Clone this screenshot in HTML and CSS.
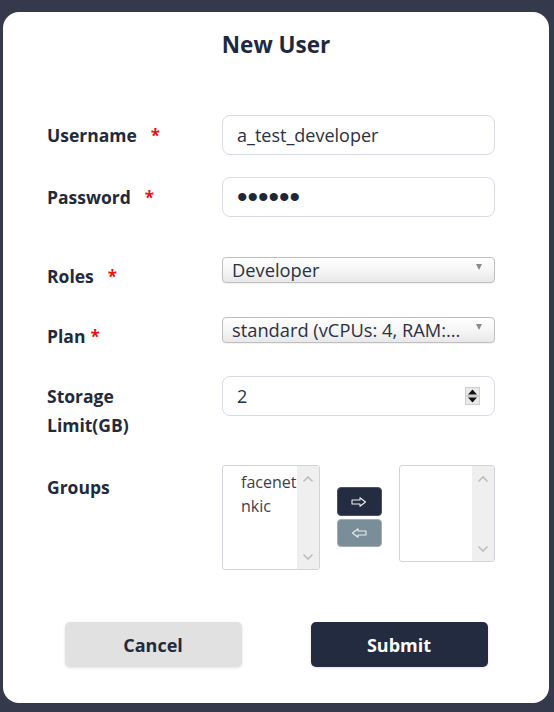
FILE: index.html
```
<!DOCTYPE html>
<html lang="en">
<head>
<meta charset="utf-8">
<title>New User</title>
<link rel="stylesheet" href="styles.css">
</head>
<body>
<div class="modal">
  <h1 class="title">New User</h1>
  <form class="form">
    <div class="row row-user">
      <label class="label">Username<span class="req">*</span></label>
      <input class="input" type="text" value="a_test_developer">
    </div>
    <div class="row row-pass">
      <label class="label">Password<span class="req">*</span></label>
      <input class="input input-pass" type="password" value="secret">
    </div>
    <div class="row row-roles">
      <label class="label label-sel">Roles<span class="req">*</span></label>
      <div class="select"><span class="select-text">Developer</span><span class="caret"></span></div>
    </div>
    <div class="row row-plan">
      <label class="label label-sel">Plan<span class="req req-near">*</span></label>
      <div class="select"><span class="select-text">standard (vCPUs: 4, RAM:...</span><span class="caret"></span></div>
    </div>
    <div class="row row-storage">
      <label class="label">Storage<br>Limit(GB)</label>
      <div class="input number">
        <span class="number-val">2</span>
        <svg class="spin" width="15" height="18" viewBox="0 0 15 18">
          <rect x="0.5" y="0.5" width="14" height="17" fill="#e9e9e9" stroke="#d0d0d0"/>
          <line x1="1" y1="9" x2="14" y2="9" stroke="#b5b5b5"/>
          <path d="M3 7.5 L7.5 2.5 L12 7.5 Z" fill="#111"/>
          <path d="M3 10.5 L7.5 15.5 L12 10.5 Z" fill="#111"/>
        </svg>
      </div>
    </div>
    <div class="row row-groups">
      <label class="label label-groups">Groups</label>
      <div class="transfer">
        <div class="listbox listbox-left">
          <div class="options">
            <div class="opt">facenet</div>
            <div class="opt">nkic</div>
          </div>
          <div class="sbar">
            <svg width="12" height="8" viewBox="0 0 12 8"><path d="M1.5 6.5 L6 2 L10.5 6.5" fill="none" stroke="#bdbdbd" stroke-width="1.6"/></svg>
            <svg width="12" height="8" viewBox="0 0 12 8"><path d="M1.5 1.5 L6 6 L10.5 1.5" fill="none" stroke="#bdbdbd" stroke-width="1.6"/></svg>
          </div>
        </div>
        <div class="movers">
          <button type="button" class="mover mover-add">
            <svg width="16" height="10" viewBox="0 0 16 10"><path d="M1 3 H9 V0.8 L14.5 5 L9 9.2 V7 H1 Z" fill="none" stroke="#f0f0f0" stroke-width="1.1" stroke-linejoin="round"/></svg>
          </button>
          <button type="button" class="mover mover-remove">
            <svg width="16" height="10" viewBox="0 0 16 10"><path d="M15 3 H7 V0.8 L1.5 5 L7 9.2 V7 H15 Z" fill="none" stroke="#e8eef0" stroke-width="1.1" stroke-linejoin="round"/></svg>
          </button>
        </div>
        <div class="listbox listbox-right">
          <div class="options"></div>
          <div class="sbar">
            <svg width="12" height="8" viewBox="0 0 12 8"><path d="M1.5 6.5 L6 2 L10.5 6.5" fill="none" stroke="#bdbdbd" stroke-width="1.6"/></svg>
            <svg width="12" height="8" viewBox="0 0 12 8"><path d="M1.5 1.5 L6 6 L10.5 1.5" fill="none" stroke="#bdbdbd" stroke-width="1.6"/></svg>
          </div>
        </div>
      </div>
    </div>
    <div class="actions">
      <button type="button" class="btn btn-cancel">Cancel</button>
      <button type="button" class="btn btn-submit">Submit</button>
    </div>
  </form>
</div>
</body>
</html>
```
FILE: styles.css
```
* { box-sizing: border-box; }
html, body { height: 100%; }
body {
  margin: 0;
  background: #343a4b;
  font-family: "Open Sans", "Liberation Sans", sans-serif;
  color: #222a3b;
  padding: 12px 5px 9px 3px;
}
.modal {
  background: #fff;
  border-radius: 16px;
  height: 691px;
  padding: 19px 54px 0 44px;
}
.title {
  margin: 0;
  font-size: 22.5px;
  line-height: 28px;
  font-weight: 700;
  text-align: center;
  color: #1e293d;
  padding-left: 10px;
}
.form {
  margin-top: 56px;
  display: flex;
  flex-direction: column;
}
.row {
  display: grid;
  grid-template-columns: 175px 273px;
  align-items: start;
}
.row-pass { margin-top: 22px; }
.row-roles { margin-top: 40px; }
.row-plan { margin-top: 26px; }
.row-storage { margin-top: 25px; }
.row-groups { margin-top: 25px; }
.label {
  font-size: 17.5px;
  font-weight: 700;
  line-height: 29px;
  margin-top: 6px;
  color: #222a3b;
}
.label-sel { margin-top: 5px; }
.label-groups { margin-top: 8px; }
.req {
  color: #ee1111;
  margin-left: 14px;
  font-size: 17px;
}
.req-near { margin-left: 5px; }
.input {
  height: 40px;
  border: 1px solid #d8dbe3;
  border-radius: 8px;
  padding: 0 14px;
  font-family: inherit;
  font-size: 18px;
  color: #2a3142;
  background: #fff;
  outline: none;
  width: 100%;
}
.input-pass {
  font-family: "Liberation Sans", sans-serif;
  font-size: 30px;
  letter-spacing: 0;
  color: #1f2637;
}
.select {
  height: 26px;
  border: 1px solid #bfbfbf;
  border-radius: 4px;
  background: linear-gradient(#ffffff 0%, #f6f6f6 50%, #e8e8e8 100%);
  display: flex;
  align-items: center;
  padding: 0 12px 0 9px;
  gap: 10px;
  box-shadow: 0 1px 1px rgba(0,0,0,0.06);
}
.select-text {
  flex: 1;
  min-width: 0;
  white-space: nowrap;
  overflow: hidden;
  font-size: 18.3px;
  line-height: 24px;
  color: #2a3142;
}
.caret {
  width: 0;
  height: 0;
  border-left: 3.5px solid transparent;
  border-right: 3.5px solid transparent;
  border-top: 6px solid #8a8a8a;
  margin-top: -6px;
}
.number {
  display: flex;
  align-items: center;
  justify-content: space-between;
  padding-right: 14px;
}
.number-val { line-height: 24px; }
.spin { display: block; margin-top: -1px; }
.transfer {
  display: flex;
  align-items: flex-start;
}
.listbox {
  display: flex;
  border: 1px solid #d0d3d9;
  border-radius: 3px;
  background: #fff;
  overflow: hidden;
}
.listbox-left { width: 98px; height: 105px; }
.listbox-right { width: 97px; height: 97px; }
.options {
  flex: 1;
  min-width: 0;
  overflow: hidden;
  padding: 4px 0 0 18px;
}
.opt {
  font-size: 16px;
  line-height: 24px;
  color: #3a4050;
  white-space: nowrap;
}
.sbar {
  width: 22px;
  background: #efefef;
  display: flex;
  flex-direction: column;
  justify-content: space-between;
  align-items: center;
  padding: 9px 0 8px;
}
.sbar svg { display: block; }
.movers {
  display: flex;
  flex-direction: column;
  gap: 3px;
  margin: 22px 17px 0;
}
.mover {
  width: 45px;
  height: 29px;
  border-radius: 4px;
  display: flex;
  align-items: center;
  justify-content: center;
  padding: 0;
  cursor: pointer;
}
.mover svg { display: block; }
.mover-add { background: #232c40; border: 1px solid #4a5263; }
.mover-remove { background: #7a8e99; border: 1px solid #a3adb4; height: 28px; }
.actions {
  display: flex;
  justify-content: center;
  gap: 69px;
  margin-top: 52px;
  padding-left: 10px;
}
.btn {
  width: 177px;
  height: 45px;
  border-radius: 5px;
  border: none;
  font-family: inherit;
  font-size: 18px;
  font-weight: 700;
  cursor: pointer;
  box-shadow: 0 1px 3px rgba(0,0,0,0.12);
}
.btn-cancel { background: #e1e1e1; color: #222a3b; }
.btn-submit { background: #222b3f; color: #ffffff; }
```
